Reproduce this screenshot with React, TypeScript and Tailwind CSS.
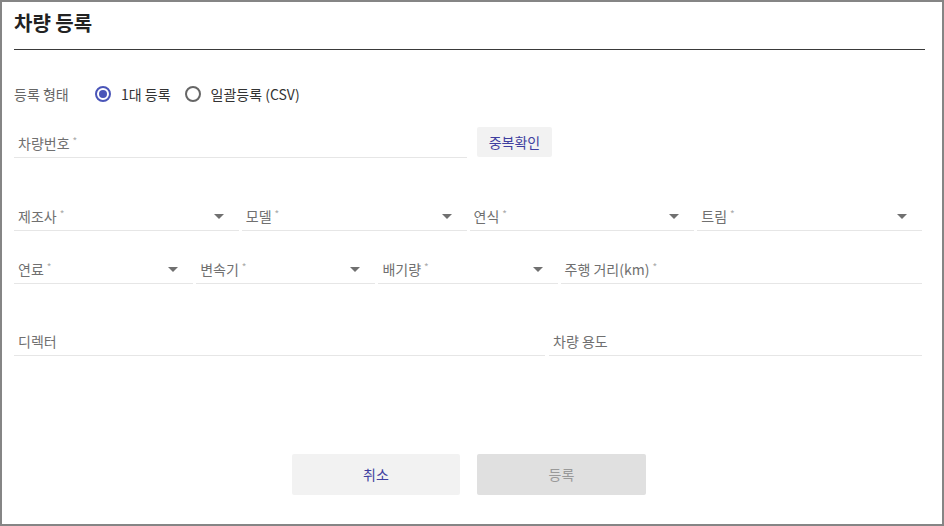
import React from "react";

const font = { fontFamily: '"Noto Sans CJK KR", "Noto Sans", sans-serif' };

// 밑줄형 입력/선택 필드
const Field = ({ label, required, select, className = "" }: { label: string; required?: boolean; select?: boolean; className?: string }) => (
  <div className={`flex items-center border-b border-[#e6e6e6] pb-[4px] pl-[4px] pr-[15px] ${className}`}>
    <span className="flex-1 text-[14px] leading-[20px] text-[#707070]">
      {label}
      {required && <span className="ml-[3px] align-top text-[10px] leading-[16px] text-[#aaa]">*</span>}
    </span>
    {select && (
      <svg width="10" height="5" viewBox="0 0 10 5" className="shrink-0">
        <path d="M0 0h10L5 5z" fill="#707070" />
      </svg>
    )}
  </div>
);

const Radio = ({ checked, label }: { checked?: boolean; label: string }) => (
  <label className="flex items-center gap-[10px]">
    <span className={`flex h-[16px] w-[16px] items-center justify-center rounded-full border-2 ${checked ? "border-[#4a55b8]" : "border-[#666]"}`}>
      {checked && <span className="h-[8px] w-[8px] rounded-full bg-[#4a55b8]" />}
    </span>
    <span className="text-[14px] leading-[20px] text-[#333]">{label}</span>
  </label>
);

export default function App() {
  return (
    <div style={font} className="h-[526px] w-[944px] border-2 border-[#858585] bg-white">
      <div className="ml-[12px] mr-[17px] border-b border-[#3a3a3a] pb-[12px] pt-[7px]">
        <h1 className="text-[20px] font-bold leading-[28px] text-[#222]">차량 등록</h1>
      </div>

      <div className="ml-[12px] mr-[20px]">
        <div className="mt-[32px] flex h-[24px] items-center">
          <span className="w-[81px] text-[14px] leading-[20px] text-[#666]">등록 형태</span>
          <div className="flex items-center gap-[14px]">
            <Radio checked label="1대 등록" />
            <Radio label="일괄등록 (CSV)" />
          </div>
        </div>

        <div className="mt-[21px] flex items-end gap-[10px]">
          <Field label="차량번호" required className="w-[453px]" />
          <button className="mb-[1px] h-[30px] w-[75px] rounded-[2px] bg-[#f2f2f2] text-[14px] text-[#3f3fa0]">중복확인</button>
        </div>

        <div className="mt-[48px] grid grid-cols-4 gap-[3px]">
          <Field label="제조사" required select />
          <Field label="모델" required select />
          <Field label="연식" required select />
          <Field label="트림" required select />
        </div>

        <div className="mt-[28px] grid grid-cols-5 gap-[3px]">
          <Field label="연료" required select />
          <Field label="변속기" required select />
          <Field label="배기량" required select />
          <Field label="주행 거리(km)" required className="col-span-2" />
        </div>

        <div className="mt-[47px] grid grid-cols-[531px_1fr] gap-[4px]">
          <Field label="디렉터" />
          <Field label="차량 용도" />
        </div>

        <div className="mt-[98px] flex justify-center gap-[17px] pl-[2px]">
          <button className="h-[41px] w-[168px] rounded-[2px] bg-[#f2f2f2] text-[14px] text-[#3f3fa0]">취소</button>
          <button className="h-[41px] w-[169px] rounded-[2px] bg-[#e0e0e0] text-[14px] text-[#999]">등록</button>
        </div>
      </div>
    </div>
  );
}
